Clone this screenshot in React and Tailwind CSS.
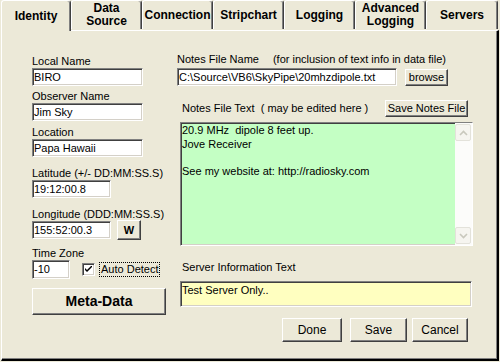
const sunken =
  "border border-t-[#808080] border-l-[#808080] border-b-white border-r-white shadow-[inset_1px_1px_0_#404040,inset_-1px_-1px_0_#d4d0c8]";
const raised =
  "border border-t-white border-l-white border-r-[#404040] border-b-[#404040] shadow-[inset_-1px_-1px_0_#808080] bg-[#ECE9D8] flex items-center justify-center whitespace-nowrap";

const tabs = [
  { label: "Data Source", two: ["Data", "Source"] },
  { label: "Connection" },
  { label: "Stripchart" },
  { label: "Logging" },
  { label: "Advanced Logging", two: ["Advanced", "Logging"] },
  { label: "Servers" },
];

function Field({ className, value }) {
  return (
    <div className={`${sunken} bg-white h-[18px] flex items-center pl-[1px] leading-none ${className}`}>
      {value}
    </div>
  );
}

function Label({ children, className = "" }) {
  return <div className={`h-[13px] leading-[13px] whitespace-nowrap ${className}`}>{children}</div>;
}

function ScrollBtn({ up }) {
  return (
    <div className="h-[17px] w-[16px] rounded-[2px] border border-[#e3e2da] bg-[#f6f5f0] flex items-center justify-center">
      <svg width="9" height="6" viewBox="0 0 9 6">
        <path
          d={up ? "M1 5 L4.5 1.5 L8 5" : "M1 1 L4.5 4.5 L8 1"}
          fill="none"
          stroke="#c9c8bd"
          strokeWidth="1.6"
        />
      </svg>
    </div>
  );
}

export default function App() {
  return (
    <div className="w-[500px] h-[362px] bg-[#ECE9D8] overflow-hidden pl-[1px] font-['Liberation_Sans',Arial,sans-serif] text-[11px] text-black">
      {/* tab strip */}
      <div className="flex items-end h-[31px] -mb-[1px]">
        <div className="relative z-10 w-[70px] h-[31px] bg-[#ECE9D8] border-l border-t border-white border-r border-r-[#404040] shadow-[inset_-1px_0_0_#808080] rounded-t-[3px] flex items-center justify-center pb-[1px] font-bold text-[12px]">
          Identity
        </div>
        {tabs.map((t, i) => (
          <div
            key={t.label}
            className={`${i === 5 ? "w-[72px]" : "w-[71px]"} h-[29px] mb-[2px] border-l border-t border-white border-r border-r-[#404040] shadow-[inset_-1px_0_0_#808080] rounded-t-[3px] flex flex-col items-center justify-center font-bold text-[12px] leading-[13px]`}
          >
            {t.two ? (
              <>
                <span>{t.two[0]}</span>
                <span>{t.two[1]}</span>
              </>
            ) : (
              t.label
            )}
          </div>
        ))}
      </div>

      {/* panel */}
      <div className="w-[498px] h-[331px] border-l border-t border-l-white border-t-white border-r-2 border-b-2 border-r-black border-b-black shadow-[inset_-1px_-1px_0_#808080] flex">
        {/* left column */}
        <div className="ml-[30px] w-[134px] pt-[24px] flex flex-col">
          <Label>Local Name</Label>
          <Field className="w-[111px]" value="BIRO" />
          <Label className="mt-[4px]">Observer Name</Label>
          <Field className="w-[111px]" value="Jim Sky" />
          <Label className="mt-[5px]">Location</Label>
          <Field className="w-[111px]" value="Papa Hawaii" />
          <Label className="mt-[10px]">Latitude (+/- DD:MM:SS.S)</Label>
          <Field className="w-[79px]" value="19:12:00.8" />
          <Label className="mt-[10px]">Longitude (DDD:MM:SS.S)</Label>
          <div className="flex items-start">
            <Field className="w-[79px]" value="155:52:00.3" />
            <div className={`${raised} ml-[6px] -mt-[1px] w-[24px] h-[20px] font-bold text-[11px]`}>W</div>
          </div>
          <Label className="mt-[7px]">Time Zone</Label>
          <div className="flex items-center">
            <Field className="w-[38px] h-[19px]" value="-10" />
            <div className={`${sunken} bg-white ml-[12px] w-[13px] h-[13px] flex items-center justify-center`}>
              <svg width="7" height="7" viewBox="0 0 7 7">
                <path d="M0 2 L0 4 L2 6 L7 1 L7 -1 L2 4 Z" fill="#000" />
              </svg>
            </div>
            <div className="ml-[4px] h-[15px] px-[1px] border border-dotted border-black flex items-center leading-none">
              Auto Detect
            </div>
          </div>
          <div className={`${raised} mt-[9px] w-[134px] h-[27px] font-bold text-[14px]`}>Meta-Data</div>
        </div>

        {/* right column */}
        <div className="ml-[11px] w-[296px] pt-[22px] flex flex-col">
          <div className="flex">
            <Label>Notes File Name</Label>
            <Label className="ml-[14px]">(for inclusion of text info in data file)</Label>
          </div>
          <div className="mt-[2px] flex items-start">
            <Field className="w-[220px]" value="C:\Source\VB6\SkyPipe\20mhzdipole.txt" />
            <div className={`${raised} ml-[8px] mt-[1px] w-[43px] h-[17px]`}>browse</div>
          </div>
          <div className="mt-[14px] flex items-center h-[17px]">
            <div className="ml-[5px] whitespace-pre">Notes File Text  ( may be edited here )</div>
            <div className={`${raised} ml-auto mr-[5px] w-[83px] h-[17px] text-[11px]`}>Save Notes File</div>
          </div>
          <div className={`${sunken} ml-[3px] mt-[5px] w-[293px] h-[124px] bg-[#C4FFC4] flex`}>
            <div className="flex-1 pl-[1px] pt-[1px] leading-[13.5px] whitespace-pre">
              <div>20.9 MHz  dipole 8 feet up.</div>
              <div>Jove Receiver</div>
              <div>&nbsp;</div>
              <div>See my website at: http://radiosky.com</div>
            </div>
            <div className="w-[17px] bg-[#fcfcfa] py-[1px] pr-[1px] flex flex-col justify-between">
              <ScrollBtn up />
              <ScrollBtn />
            </div>
          </div>
          <Label className="ml-[5px] mt-[15px]">Server Information Text</Label>
          <div className={`${sunken} ml-[3px] mt-[7px] w-[292px] h-[26px] bg-[#FFFFC0] pl-[1px] pt-[2px] leading-[13px]`}>
            Test Server Only..
          </div>
          <div className="mt-[11px] flex h-[24px] text-[12px]">
            <div className={`${raised} ml-[105px] w-[60px] h-[24px]`}>Done</div>
            <div className={`${raised} ml-[8px] w-[57px] h-[24px]`}>Save</div>
            <div className={`${raised} ml-[5px] w-[56px] h-[24px]`}>Cancel</div>
          </div>
        </div>
      </div>
    </div>
  );
}
